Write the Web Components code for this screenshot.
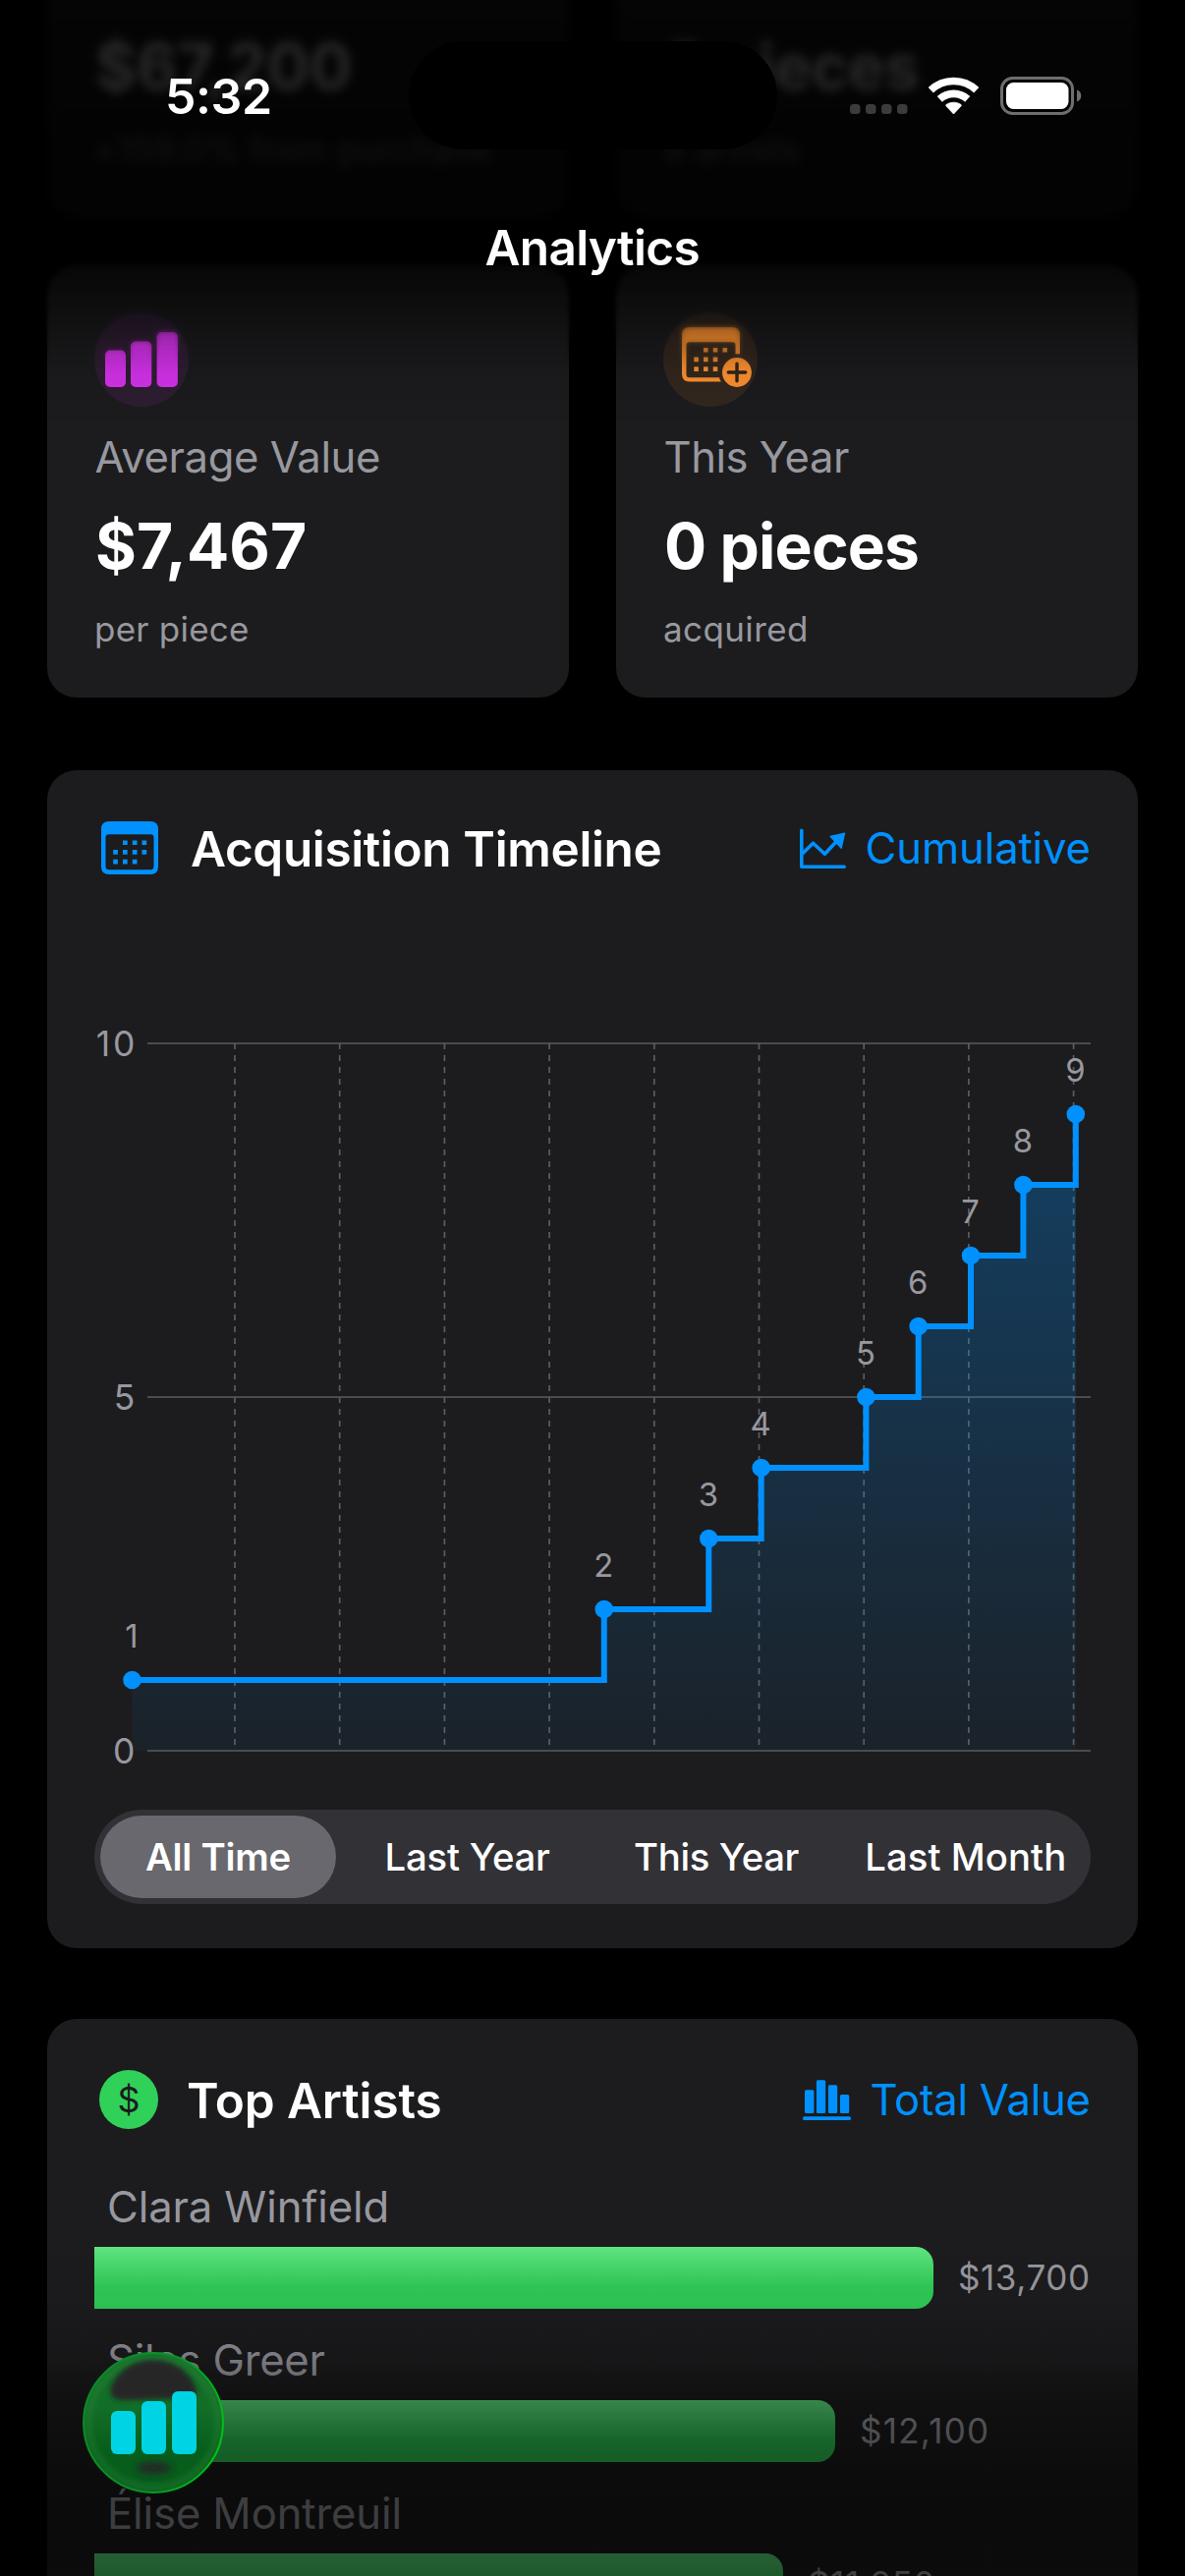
<!DOCTYPE html>
<html lang="en">
<head>
<meta charset="utf-8">
<title>Analytics</title>
<style>
html,body{margin:0;background:#000;overflow:hidden}
body{width:1206px;height:2622px;font-family:Inter,"Liberation Sans",sans-serif;color:#fff;font-optical-sizing:none}
</style>
</head>
<body>
<analytics-screen></analytics-screen>
<script>
const define=(name,html,setup)=>{
  const t=document.createElement('template');t.innerHTML=html;
  customElements.define(name,class extends HTMLElement{
    connectedCallback(){
      if(this.shadowRoot)return;
      this.attachShadow({mode:'open'}).append(t.content.cloneNode(true));
      if(setup)setup(this,this.shadowRoot);
    }
  });
};

/* One line of text, tracked so that its ink spans the width given in "ink". */
const pen=document.createElement('canvas').getContext('2d');
define('tracked-text',`<style>:host{display:block;white-space:pre}span{display:inline-block}</style><span></span>`,(el,root)=>{
  const s=root.querySelector('span'),text=el.getAttribute('text'),ink=+el.getAttribute('ink');
  s.textContent=text;
  if(!ink)return;
  const cs=getComputedStyle(s);
  pen.font=`${cs.fontWeight} ${cs.fontSize} ${cs.fontFamily}`;
  const m=pen.measureText(text);
  const bearings=m.width-(m.actualBoundingBoxRight+m.actualBoundingBoxLeft);
  const ls=(ink+bearings-s.getBoundingClientRect().width)/(text.length-1);
  s.style.letterSpacing=ls.toFixed(3)+'px';
  s.style.marginRight=(-ls).toFixed(3)+'px';
});

define('stat-card',`<style>
:host{display:flex;flex-direction:column;justify-content:flex-end;align-items:flex-start;gap:24px;box-sizing:border-box;
 background:#1c1c1e;border-radius:30px;padding:48px;min-width:0}
:host([clipped]){border-radius:0 0 30px 30px;padding-top:0}
.label{font-size:43.6px;line-height:54px;color:#98989f;padding:1px 0 0 .500px;margin-bottom:-1px}
.value{font-size:64px;line-height:79px;font-weight:700;padding-left:1px}
.note{font-size:35px;line-height:43px;color:#98989f}
</style><slot name="icon"></slot><tracked-text class="label"></tracked-text><tracked-text class="value"></tracked-text><tracked-text class="note"></tracked-text>`,(el,root)=>{
  for(const k of ['label','value','note']){
    const n=root.querySelector('.'+k);
    if(!el.hasAttribute(k)){n.remove();continue}
    const [text,ink]=el.getAttribute(k).split('|');
    const c=document.createElement('tracked-text');
    c.className=k;c.setAttribute('text',text);c.setAttribute('ink',ink);n.replaceWith(c);
  }
});

const icons={
 average:['96 318 96 96',96,96,`<circle cx="144" cy="366" r="48" fill="#db34f2" fill-opacity=".1"/><g fill="#d633ec"><rect x="107" y="356.5" width="21" height="37.5" rx="5"/><rect x="133" y="347.5" width="21.3" height="46.5" rx="5"/><rect x="159.6" y="338" width="21.3" height="56" rx="5"/></g>`],
 year:['675 318 96 96',96,96,`<circle cx="723" cy="366" r="48" fill="#ff9230" fill-opacity=".1"/>
  <mask id="m"><rect x="675" y="318" width="96" height="96" fill="#fff"/><circle cx="750" cy="379" r="18.8" fill="#000"/></mask>
  <g mask="url(#m)" fill="#ff9230"><path fill-rule="evenodd" d="M702 333h43q8 0 8 8v39.500q0 8-8 8h-43q-8 0-8-8V341q0-8 8-8zM701.500 348.300q-3 0-3 3V381q0 3.200 3 3.200h44q3 0 3-3.200v-29.700q0-3-3-3z"/>
  <path d="M716 354h4.600v4.600h-4.600zM725.700 354h4.600v4.600h-4.600zM735.500 354h4.600v4.600h-4.600zM706.300 363.600h4.600v4.600h-4.600zM716 363.600h4.600v4.600h-4.600zM725.700 363.600h4.600v4.600h-4.600zM706.300 373.300h4.600v4.600h-4.600zM716 373.300h4.600v4.600h-4.600zM725.700 373.300h4.600v4.600h-4.600z"/></g>
  <circle cx="750" cy="379" r="15" fill="#ff9230"/><path d="M750 370.300v17.400M741.300 379h17.400" stroke="#33251c" stroke-width="3.400" stroke-linecap="round"/>`],
 calendar:['96 832 72 62',72,62,`<g fill="#0091ff"><path fill-rule="evenodd" d="M111 836h42q8 0 8 8v38q0 8-8 8H111q-8 0-8-8v-38q0-8 8-8zM110.800 849.200q-3.300 0-3.300 3.300v29.200q0 3.600 3.300 3.600h42.400q3.300 0 3.300-3.600v-29.200q0-3.300-3.300-3.300z"/>
  <path d="M125 855.400h4.700v4.700H125zM134.800 855.400h4.700v4.700h-4.700zM144.500 855.400h4.700v4.700h-4.700zM115.200 865h4.700v4.700h-4.700zM125 865h4.700v4.700H125zM134.800 865h4.700v4.700h-4.700zM144.500 865h4.700v4.700h-4.700zM115.200 874.700h4.700v4.700h-4.700zM125 874.700h4.700v4.700H125zM134.800 874.700h4.700v4.700h-4.700z"/></g>`],
 trend:['811 832 53 62',53,62,`<g fill="none" stroke="#0091ff" stroke-width="3.600" stroke-linecap="round" stroke-linejoin="round"><path d="M815.800 845.300v37h43.400"/><path d="M817 868.500l10.500-10.300 11.900 11 12.500-13.500"/></g><path d="M845 851.400l14.600-3.200-3.400 15.200z" fill="#0091ff" stroke="#0091ff" stroke-width="1.200" stroke-linejoin="round"/>`],
 dollar:['96 2103 70 68',70,68,`<circle cx="131" cy="2137" r="30" fill="#30d158"/><text x="131" y="2150.300" text-anchor="middle" font-size="36" fill="#1c1c1e">$</text>`],
 bars:['814 2103 56 68',56,68,`<g fill="#0091ff"><rect x="819" y="2127.300" width="9.400" height="23.700" rx="1.500"/><rect x="830.900" y="2117.200" width="9.300" height="33.800" rx="1.500"/><rect x="842.900" y="2122.300" width="9.300" height="28.700" rx="1.500"/><rect x="854.900" y="2132" width="9.300" height="19" rx="1.500"/><rect x="817" y="2154.200" width="49" height="3.900" rx="1.900"/></g>`]
};
define('app-icon',`<style>:host{display:block;flex:none}svg{display:block}</style>`,(el,root)=>{
  const [vb,w,h,body]=icons[el.getAttribute('name')];
  const box=document.createElement('div');
  box.innerHTML=`<svg viewBox="${vb}" width="${w}" height="${h}" font-family="Inter" aria-hidden="true">${body}</svg>`;
  root.append(box);
});

define('panel-card',`<style>
:host{display:flex;flex-direction:column;box-sizing:border-box;background:#1c1c1e;border-radius:30px;padding:48px 48px 45px}
header{display:flex;align-items:center;justify-content:space-between;height:var(--head,62px)}
.side{display:flex;align-items:center}
.side.left{gap:var(--gap,26px)}
.side.right{gap:var(--link-gap,17px);color:#0091ff}
::slotted([slot=title]){font-size:49.5px;line-height:60px;font-weight:600;padding-top:2px}
::slotted([slot=action]){font-size:43.6px;line-height:54px;padding-top:1.500px}
</style><header><div class="side left"><slot name="icon"></slot><slot name="title"></slot></div><div class="side right"><slot name="action-icon"></slot><slot name="action"></slot></div></header><slot></slot>`);

define('step-chart',`<style>:host{display:block;margin-top:136px}svg{display:block}text{font-family:Inter,sans-serif;fill:#98989f}</style>
<svg viewBox="96 1030 1014 770" width="1014" height="770"></svg>`,(el,root)=>{
  const y=v=>1782-72*v;
  const pts=el.getAttribute('points').split(' ').map((x,i)=>[+x,y(i+1)]);
  let line=`M${pts[0][0]} ${pts[0][1]}`;
  for(const p of pts.slice(1))line+=`H${p[0]}V${p[1]}`;
  let out=`<defs><linearGradient id="g" gradientUnits="userSpaceOnUse" x1="0" x2="0" y1="1134" y2="1782"><stop offset="0" stop-color="#0091ff" stop-opacity=".31"/><stop offset="1" stop-color="#0091ff" stop-opacity=".05"/></linearGradient></defs>`;
  for(const v of [0,5,10])out+=`<rect x="150" y="${y(v)-1}" width="960" height="2" fill="#4b4b4d"/>`;
  for(let i=0;i<9;i++)out+=`<path d="M${(239+i*106.7).toFixed(1)} 1062V1776" stroke="#5c5c5e" stroke-width="1.700" stroke-dasharray="6 6"/>`;
  out+=`<path d="${line}V1782H${pts[0][0]}Z" fill="url(#g)"/>`;
  for(const v of [0,5,10])out+=`<text x="137.300" y="${y(v)+12.9}" text-anchor="end" font-size="35.500" ${v===10?'textLength="39.500"':''}>${v}</text>`;
  pts.forEach((p,i)=>out+=`<text x="${p[0]-.5}" y="${p[1]-32.7}" text-anchor="middle" font-size="32.800">${i+1}</text>`);
  out+=`<path d="${line}" fill="none" stroke="#0091ff" stroke-width="6"/>`;
  for(const p of pts)out+=`<circle cx="${p[0]}" cy="${p[1]}" r="9.300" fill="#0091ff"/>`;
  root.querySelector('svg').innerHTML=out;
});

define('segment-control',`<style>
:host{display:grid;grid-template-columns:repeat(4,1fr);height:96px;margin-top:42px;border-radius:48px;background:#323136;box-sizing:border-box}
::slotted(*){display:flex!important;align-items:center;justify-content:center;margin:6px 7px 6px 6px;border-radius:42px;font-size:38.300px;font-weight:500}
::slotted([selected]){background:#69686e;font-weight:600;margin-right:7.5px}
</style><slot></slot>`);

define('artist-row',`<style>
:host{display:flex;flex-direction:column;gap:14px;height:130px;flex:none}
.name{font-size:43.6px;line-height:54px;color:#98989f;padding:1px 0 0 13px;margin-bottom:-1px}
.line{display:flex;align-items:center;gap:25px}
.bar{height:62.600px;border-radius:0 18px 18px 0;background:linear-gradient(#60e781,#30cb57 65%,#30cb57)}
.amount{font-size:35px;line-height:43px;color:#98989f;padding-top:1px}
</style><div class="top"></div><div class="line"><div class="bar"></div></div>`,(el,root)=>{
  const mk=(cls,v)=>{const [t,i]=v.split('|'),c=document.createElement('tracked-text');c.className=cls;c.setAttribute('text',t);c.setAttribute('ink',i);return c};
  root.querySelector('.top').replaceWith(mk('name',el.getAttribute('name')));
  root.querySelector('.bar').style.width=el.getAttribute('length')+'px';
  root.querySelector('.line').append(mk('amount',el.getAttribute('amount')));
});

define('edge-fade',`<style>
:host{display:block;position:absolute;inset:0;pointer-events:none}
div{position:absolute;left:0;right:0}
.b1{top:0;height:300px;backdrop-filter:blur(5px);mask-image:linear-gradient(#000 80%,transparent)}
.b2{top:0;height:375px;backdrop-filter:blur(2.500px);mask-image:linear-gradient(#000 82%,transparent)}
.t{top:0;height:440px;background:linear-gradient(rgba(0,0,0,.8),rgba(0,0,0,.84) 30px,rgba(0,0,0,.85) 90px,rgba(0,0,0,.88) 150px,rgba(0,0,0,.88) 215px,rgba(0,0,0,.74) 265px,rgba(0,0,0,.6) 292px,rgba(0,0,0,.38) 325px,rgba(0,0,0,.2) 352px,rgba(0,0,0,.08) 380px,transparent 430px)}
.u{top:2270px;bottom:0;background:linear-gradient(transparent,rgba(0,0,0,.05) 75px,rgba(0,0,0,.2) 130px,rgba(0,0,0,.42) 172px,rgba(0,0,0,.54) 230px,rgba(0,0,0,.6) 275px,rgba(0,0,0,.59))}
</style><div class="b2"></div><div class="b1"></div><div class="t"></div><div class="u"></div>`);

define('status-bar',`<style>
:host{display:flex;position:absolute;left:0;right:0;top:0;flex-direction:column}
.row{display:flex;height:194px;box-sizing:border-box;padding:42px 103px 42px 168px;align-items:flex-start}
.time{font-size:50px;font-weight:600;line-height:60px;padding-top:26px;width:248px}
.island{width:375px;height:110px;border-radius:55px;background:#000}
svg{display:block;margin:34px 0 0 auto}
.title{align-self:center;font-size:49.500px;font-weight:600;line-height:60px;margin-top:28px}
</style><div class="row"><tracked-text class="time" text="5:32" ink="104"></tracked-text><div class="island"></div>
<svg viewBox="863 76 240 44" width="240" height="44"><g fill="#3b3b3b"><rect x="865" y="106" width="10.500" height="10" rx="3.500"/><rect x="881" y="106" width="10.500" height="10" rx="3.500"/><rect x="897" y="106" width="10.500" height="10" rx="3.500"/><rect x="913" y="106" width="10.500" height="10" rx="3.500"/></g>
<g fill="none" stroke="#fff" stroke-width="7.600"><path d="M947.300 91.700A33.800 33.800 0 0 1 993.700 91.700"/><path d="M956.300 100.900A21 21 0 0 1 984.700 100.900"/></g><path d="M970.500 116l-7.500-8q-.8-1 .2-1.700 7.300-4.300 14.600 0 1 .7.200 1.700z" fill="#fff" stroke="#fff" stroke-width=".8" stroke-linejoin="round"/>
<rect x="1019.500" y="79.500" width="72" height="36" rx="11" fill="none" stroke="#6e6e6e" stroke-width="3"/><rect x="1024" y="84" width="63.500" height="27" rx="7.500" fill="#fff"/><path d="M1096 91.500q4.300 1.700 4.300 6t-4.300 6z" fill="#6e6e6e"/></svg></div>
<tracked-text class="title" text="Analytics" ink="217"></tracked-text>`);

define('chart-fab',`<style>
:host{display:block;position:absolute;left:84px;top:2394px;width:144px;height:144px}
svg{display:block}
</style><svg viewBox="84 2394 144 144" width="144" height="144">
<defs><linearGradient id="a" x1="0" y1="0" x2="0" y2="1"><stop offset="0" stop-color="#14702a"/><stop offset=".4" stop-color="#126d27"/><stop offset=".7" stop-color="#075e1b"/><stop offset="1" stop-color="#075c1b"/></linearGradient>
<linearGradient id="r" x1="0" y1=".3" x2="1" y2=".6"><stop offset="0" stop-color="#0c8a25"/><stop offset=".6" stop-color="#07972a"/><stop offset="1" stop-color="#00c214"/></linearGradient>
<filter id="f" x="-30%" y="-30%" width="160%" height="160%"><feGaussianBlur stdDeviation="2.400"/></filter><filter id="h" x="-50%" y="-90%" width="200%" height="280%"><feGaussianBlur stdDeviation="3.600"/></filter></defs>
<circle cx="156" cy="2466" r="71" fill="url(#a)"/>
<circle cx="156" cy="2466" r="66" fill="none" stroke="#2a8c3c" stroke-opacity=".28" stroke-width="8" filter="url(#f)"/>
<path d="M113 2430C119 2413 136 2402 156 2402S193 2413 199 2430Q203 2441 190 2441L126 2443Q110 2443 113 2430Z" fill="#262628" filter="url(#f)"/>
<ellipse cx="156.500" cy="2512" rx="18" ry="6.500" fill="#242c26" filter="url(#h)"/>
<circle cx="156" cy="2466" r="70.900" fill="none" stroke="url(#r)" stroke-width="2"/>
<g fill="#00d3e3"><rect x="113" y="2454" width="25" height="44" rx="6"/><rect x="144" y="2444" width="25" height="54" rx="6"/><rect x="175" y="2434" width="25" height="64" rx="6"/></g></svg>`);

define('analytics-screen',`<style>
:host{display:block;position:relative;width:1206px;height:2622px;overflow:hidden;background:#000}
main{display:flex;flex-direction:column;padding:0 48px}
.pair{display:grid;grid-template:100%/531px 531px;justify-content:space-between;height:440px;margin-bottom:74px}
.pair.top{height:222px;margin-bottom:48px}
.artists{--head:68px;--gap:24px;--link-gap:16px;margin-top:72px;height:720px}
.rows{display:flex;flex-direction:column;gap:26px;margin-top:48px}
</style>
<main>
<div class="pair top"><stat-card clipped value="$67,200|257" note="+159.0% from purchase|400"></stat-card><stat-card clipped value="9 pieces|256" note="9 artists|135"></stat-card></div>
<div class="pair"><stat-card label="Average Value|288.500" value="$7,467|211" note="per piece|154"><app-icon slot="icon" name="average"></app-icon></stat-card>
<stat-card label="This Year|186.500" value="0 pieces|256" note="acquired|144"><app-icon slot="icon" name="year"></app-icon></stat-card></div>
<panel-card><app-icon slot="icon" name="calendar"></app-icon><tracked-text slot="title" text="Acquisition Timeline" ink="477.500"></tracked-text><app-icon slot="action-icon" name="trend"></app-icon><tracked-text slot="action" text="Cumulative" ink="226"></tracked-text>
<step-chart points="134.5 614.8 721.3 774.7 881.4 934.7 988 1041.4 1094.8"></step-chart>
<segment-control><tracked-text selected text="All Time" ink="147.500"></tracked-text><tracked-text text="Last Year" ink="164.500"></tracked-text><tracked-text text="This Year" ink="166.500"></tracked-text><tracked-text text="Last Month" ink="200"></tracked-text></segment-control></panel-card>
<panel-card class="artists"><app-icon slot="icon" name="dollar"></app-icon><tracked-text slot="title" text="Top Artists" ink="256.500"></tracked-text><app-icon slot="action-icon" name="bars"></app-icon><tracked-text slot="action" text="Total Value" ink="221"></tracked-text>
<div class="rows"><artist-row name="Clara Winfield|282.500" length="854" amount="$13,700|131"></artist-row><artist-row name="Silas Greer|219.500" length="754" amount="$12,100|128"></artist-row><artist-row name="Élise Montreuil|294.500" length="701" amount="$11,250|126.500"></artist-row></div></panel-card>
</main>
<edge-fade></edge-fade><status-bar></status-bar><chart-fab></chart-fab>`);
</script>
</body>
</html>
